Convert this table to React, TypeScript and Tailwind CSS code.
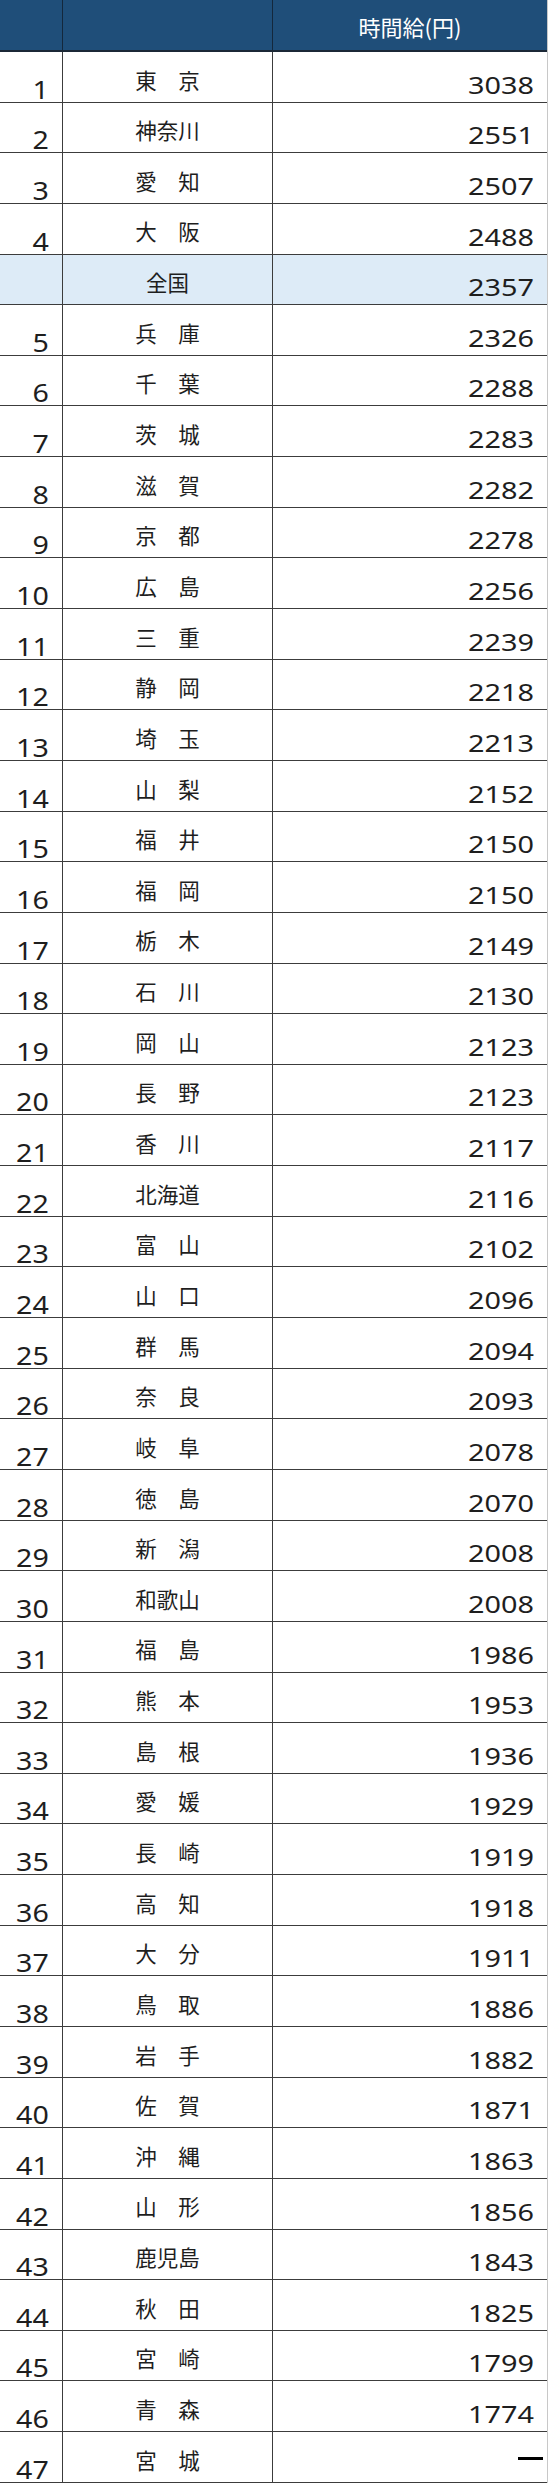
import React from 'react';

type Row = { rank?: number; name: string; wage: string; national?: boolean };

const rows: Row[] = [
  { rank: 1, name: '東京', wage: '3038' },
  { rank: 2, name: '神奈川', wage: '2551' },
  { rank: 3, name: '愛知', wage: '2507' },
  { rank: 4, name: '大阪', wage: '2488' },
  { name: '全国', wage: '2357', national: true },
  { rank: 5, name: '兵庫', wage: '2326' },
  { rank: 6, name: '千葉', wage: '2288' },
  { rank: 7, name: '茨城', wage: '2283' },
  { rank: 8, name: '滋賀', wage: '2282' },
  { rank: 9, name: '京都', wage: '2278' },
  { rank: 10, name: '広島', wage: '2256' },
  { rank: 11, name: '三重', wage: '2239' },
  { rank: 12, name: '静岡', wage: '2218' },
  { rank: 13, name: '埼玉', wage: '2213' },
  { rank: 14, name: '山梨', wage: '2152' },
  { rank: 15, name: '福井', wage: '2150' },
  { rank: 16, name: '福岡', wage: '2150' },
  { rank: 17, name: '栃木', wage: '2149' },
  { rank: 18, name: '石川', wage: '2130' },
  { rank: 19, name: '岡山', wage: '2123' },
  { rank: 20, name: '長野', wage: '2123' },
  { rank: 21, name: '香川', wage: '2117' },
  { rank: 22, name: '北海道', wage: '2116' },
  { rank: 23, name: '富山', wage: '2102' },
  { rank: 24, name: '山口', wage: '2096' },
  { rank: 25, name: '群馬', wage: '2094' },
  { rank: 26, name: '奈良', wage: '2093' },
  { rank: 27, name: '岐阜', wage: '2078' },
  { rank: 28, name: '徳島', wage: '2070' },
  { rank: 29, name: '新潟', wage: '2008' },
  { rank: 30, name: '和歌山', wage: '2008' },
  { rank: 31, name: '福島', wage: '1986' },
  { rank: 32, name: '熊本', wage: '1953' },
  { rank: 33, name: '島根', wage: '1936' },
  { rank: 34, name: '愛媛', wage: '1929' },
  { rank: 35, name: '長崎', wage: '1919' },
  { rank: 36, name: '高知', wage: '1918' },
  { rank: 37, name: '大分', wage: '1911' },
  { rank: 38, name: '鳥取', wage: '1886' },
  { rank: 39, name: '岩手', wage: '1882' },
  { rank: 40, name: '佐賀', wage: '1871' },
  { rank: 41, name: '沖縄', wage: '1863' },
  { rank: 42, name: '山形', wage: '1856' },
  { rank: 43, name: '鹿児島', wage: '1843' },
  { rank: 44, name: '秋田', wage: '1825' },
  { rank: 45, name: '宮崎', wage: '1799' },
  { rank: 46, name: '青森', wage: '1774' },
  { rank: 47, name: '宮城', wage: '—' },
];

// two-character prefectures are spaced out with a full-width space
const label = (r: Row) => (r.name.length === 2 && !r.national ? r.name[0] + '\u3000' + r.name[1] : r.name);

const App: React.FC = () => {
  return (
    <div className="w-[550px] bg-white text-[#1e1e1e] font-['Noto_Sans_CJK_JP',sans-serif]">
      <div className="w-[548px] border-r border-[#c8c8c8]">
        <div className="grid h-[52px] grid-cols-[63px_210px_1fr] border-b-2 border-[#1b2836] bg-[#1f4e79]">
          <div className="border-r-[1.5px] border-[#14283c]" />
          <div className="border-r-[1.5px] border-[#14283c]" />
          <div className="flex items-center justify-center pt-[3px] text-[22px] text-white">時間給(円)</div>
        </div>

        {rows.map((r, i) => (
          <div
            key={i}
            className={`grid h-[50.65px] grid-cols-[63px_210px_1fr] border-b-[1.5px] border-[#3c3c3c] ${r.national ? 'bg-[#ddebf7]' : ''}`}
          >
            <div className="flex items-end justify-end border-r-[1.5px] border-[#3c3c3c] pr-[13px] font-['Noto_Sans',sans-serif] text-[26px] leading-none">
              {r.rank && <span className="inline-block origin-right scale-x-[1.1]">{r.rank}</span>}
            </div>
            <div className="flex items-center justify-center border-r-[1.5px] border-[#3c3c3c] pt-[5px] text-[21.5px] leading-none">
              {label(r)}
            </div>
            {r.wage === '—' ? (
              <div className="flex items-center justify-end pr-[4px] pt-[4px]">
                <span className="block h-[3px] w-[25px] bg-black" aria-label="—" />
              </div>
            ) : (
              <div className="flex items-end justify-end pb-[5px] pr-[13px] font-['Noto_Sans',sans-serif] text-[24px] leading-none">
                <span className="inline-block origin-right scale-x-[1.2]">{r.wage}</span>
              </div>
            )}
          </div>
        ))}
      </div>
    </div>
  );
};

export default App;
